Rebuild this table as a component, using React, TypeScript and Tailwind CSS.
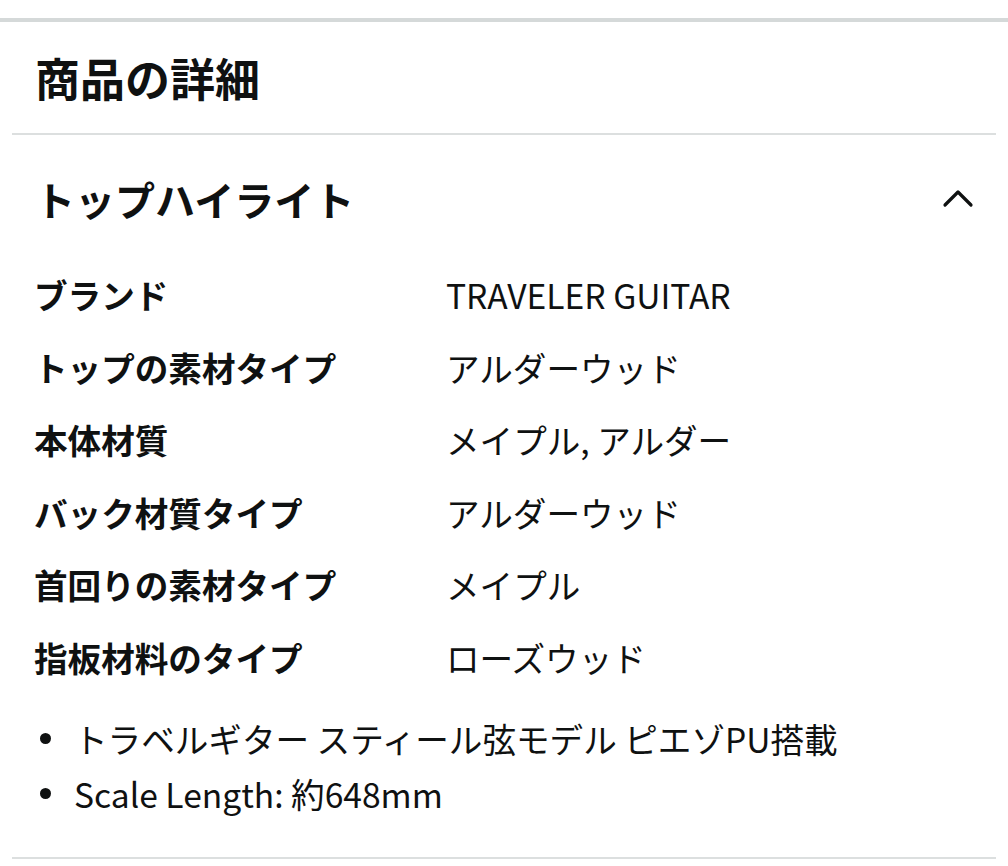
import React from 'react';

const rows: [string, string][] = [
  ['ブランド', 'TRAVELER GUITAR'],
  ['トップの素材タイプ', 'アルダーウッド'],
  ['本体材質', 'メイプル, アルダー'],
  ['バック材質タイプ', 'アルダーウッド'],
  ['首回りの素材タイプ', 'メイプル'],
  ['指板材料のタイプ', 'ローズウッド'],
];

const bullets = ['トラベルギター スティール弦モデル ピエゾPU搭載', 'Scale Length: 約648mm'];

export default function App() {
  return (
    <div className="w-[1008px] h-[866px] overflow-hidden bg-white text-[#0f1111] font-['Noto_Sans_CJK_JP','Noto_Sans',sans-serif]">
      <div className="h-[18px]" />
      <div className="h-[4px] bg-[#d5d9d9]" />

      {/* Section title */}
      <div className="h-[111px] flex items-center px-[35px]">
        <h2 className="text-[45px] font-bold leading-none">商品の詳細</h2>
      </div>
      <div className="mx-[12px] h-[2px] bg-[#dcdfdf]" />

      {/* Accordion header */}
      <div className="h-[124px] pt-[4px] flex items-center justify-between pl-[35px] pr-[34px]">
        <h3 className="text-[40px] font-bold leading-none">トップハイライト</h3>
        <svg width="32" height="20" viewBox="0 0 32 20" fill="none" stroke="#0f1111" strokeWidth="3.2" strokeLinecap="round" strokeLinejoin="round">
          <path d="M3 16 L16 3 L29 16" />
        </svg>
      </div>

      {/* Attribute table */}
      <div className="pl-[34px]">
        {rows.map(([label, value]) => (
          <div key={label} className="h-[72.5px] flex items-center text-[33.6px] leading-none">
            <span className="w-[412px] font-bold">{label}</span>
            <span>{value}</span>
          </div>
        ))}
      </div>

      <ul className="mt-[17px] pl-[40px]">
        {bullets.map((b) => (
          <li key={b} className="h-[55px] flex items-center text-[33.6px] leading-none">
            <span className="w-[11px] h-[11px] rounded-full bg-[#0f1111] mr-[23px]" />
            <span>{b}</span>
          </li>
        ))}
      </ul>

      <div className="mt-[36px] mx-[12px] h-[2px] bg-[#dcdfdf]" />
    </div>
  );
}
